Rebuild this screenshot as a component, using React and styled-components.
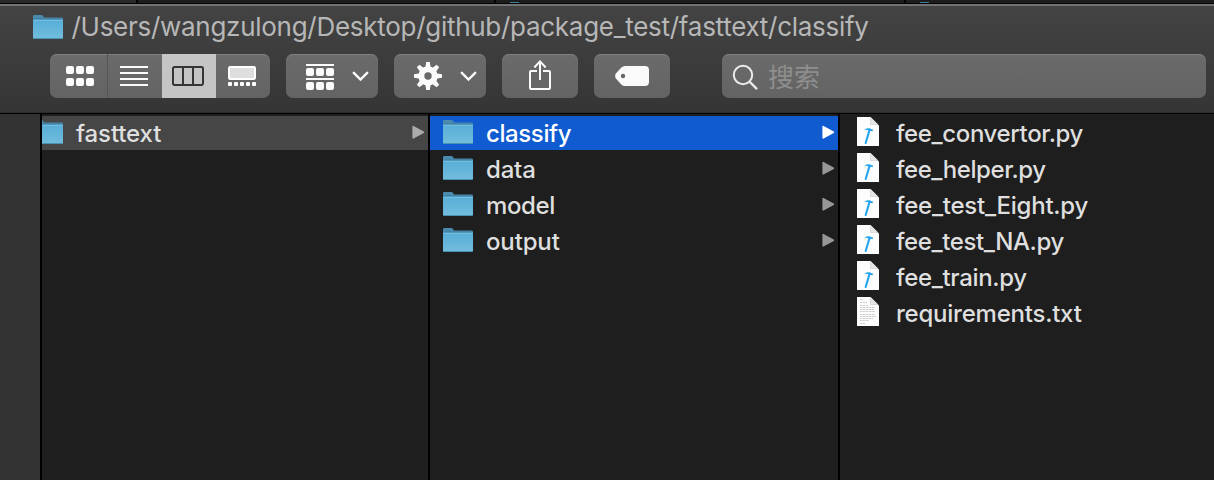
import React from "react";
import styled, { createGlobalStyle } from "styled-components";

const GlobalStyle = createGlobalStyle`
  * { box-sizing: border-box; }
  html, body { margin: 0; padding: 0; background: #1e1e1e; overflow: hidden; }
  svg { display: block; flex: none; }
`;

const Window = styled.div`
  width: 1214px;
  height: 480px;
  display: flex;
  flex-direction: column;
  font-family: Inter, "Noto Sans CJK SC", sans-serif;
  background: #1e1e1e;
  overflow: hidden;
`;

const Backdrop = styled.div`
  display: flex;
  flex: none;
  height: 4px;
  border-bottom: 1px solid #050505;
  background: #1d1d1d;
`;

const BackdropPane = styled.div`
  width: ${(p) => p.$width}px;
  flex: none;
  padding: 2px 0 0 ${(p) => p.$inset || 0}px;
  background: ${(p) => p.$color || "#1d1d1d"};
  border-right: ${(p) => (p.$last ? "0" : "2px solid #000")};
`;

const FolderTip = styled.div`
  width: 9px;
  height: 1px;
  background: #3f7d9c;
`;

const Header = styled.header`
  flex: none;
  height: 110px;
  border-top: 2px solid #727372;
  border-bottom: 1px solid #000;
  background: linear-gradient(#434343, #353535);
  box-shadow: inset 0 -1px 0 #2c2c2c;
`;

const TitleBar = styled.div`
  height: 48px;
  padding: 0 0 7px 33px;
  display: flex;
  align-items: center;
`;

const Title = styled.div`
  margin-left: 8.5px;
  font-size: 26px;
  line-height: 34px;
  letter-spacing: ${(p) => p.$tracking}px;
  color: #b7b7b7;
  white-space: nowrap;
`;

const Toolbar = styled.div`
  display: flex;
  gap: 16px;
  padding: 0 8px 0 50px;
  height: 44px;
`;

const Control = styled.div`
  display: flex;
  flex: none;
  width: ${(p) => p.$width}px;
  height: 44px;
  border-radius: 7px;
  overflow: hidden;
  background: linear-gradient(#6b6b6b, #636363);
  box-shadow: inset 0 1px 0 #7e7e7e;
`;

const Segment = styled.div`
  width: ${(p) => p.$width}px;
  height: 44px;
  display: flex;
  align-items: center;
  justify-content: center;
  padding: ${(p) => (p.$divided ? "0 0 0 3px" : "0 2px 0 0")};
  background: ${(p) => (p.$active ? "#c5c5c5" : "transparent")};
  border-right: ${(p) => (p.$divided ? "1px solid #565656" : "0")};
`;

const MenuControl = styled(Control)`
  align-items: center;
  padding-left: 20px;
  gap: 18px;
`;

const ButtonControl = styled(Control)`
  align-items: center;
  justify-content: center;
  padding-bottom: ${(p) => p.$lift || 0}px;
`;

const SearchField = styled(Control)`
  margin-left: 36px;
  align-items: center;
  padding-left: 10px;
  gap: 10px;
`;

const Placeholder = styled.span`
  font-family: "Noto Sans CJK SC", sans-serif;
  font-size: 26px;
  line-height: 44px;
  color: #8e8e8e;
`;

const Browser = styled.main`
  display: flex;
  flex: 1;
`;

const Sidebar = styled.aside`
  width: 42px;
  flex: none;
  background: #323232;
  border-right: 2px solid #000;
`;

const Column = styled.section`
  width: ${(p) => p.$width}px;
  flex: none;
  padding-top: 2px;
  display: flex;
  flex-direction: column;
  gap: 2px;
  overflow: hidden;
  border-right: ${(p) => (p.$last ? "0" : "2px solid #000")};
`;

const Row = styled.div`
  height: 34px;
  display: flex;
  align-items: center;
  padding: 0 3.5px 0 ${(p) => p.$inset}px;
  color: ${(p) => (p.$tone === "selected" ? "#fff" : "#dfdfdf")};
  background: ${(p) => ({ selected: "#105bd0", path: "#464646" })[p.$tone] || "transparent"};
`;

const IconSlot = styled.span`
  display: flex;
  flex: none;
  padding-bottom: 2px;
  margin-left: ${(p) => (p.$clipped ? -9 : 0)}px;
`;

const Name = styled.span`
  flex: 1;
  margin-left: ${(p) => p.$gap}px;
  padding-top: 2px;
  font-size: 24px;
  font-weight: 450;
  line-height: 34px;
  letter-spacing: ${(p) => p.$tracking || 0}px;
  white-space: nowrap;
`;

const Folder = () => (
  <svg width="30" height="26" viewBox="0 0 30 26">
    <defs>
      <linearGradient id="folderFront" x1="0" y1="0" x2="0" y2="1">
        <stop offset="0" stopColor="#57add7" />
        <stop offset="1" stopColor="#72bddd" />
      </linearGradient>
    </defs>
    <path d="M0 2.2Q0 1 1.2 1H8.4Q9.4 1 10 2L11 3.6H28.7Q30 3.6 30 5V9H0Z" fill="#4a8aad" />
    <path d="M0 5.6H30V23.4Q30 25 28.4 25H1.6Q0 25 0 23.4Z" fill="url(#folderFront)" />
    <path d="M.5 6.2H29.5" stroke="#7bc5e4" />
    <path d="M.5 5H29.5" stroke="#397699" strokeWidth=".7" />
    <path d="M1 24.5H29" stroke="#4c91b1" />
  </svg>
);

const Arrow = ({ color }) => (
  <svg width="13" height="16" viewBox="0 0 13 16">
    <path d="M1.2 1.6L11.4 7.2L1.2 12.9Z" fill={color} stroke={color} strokeWidth="1.6" strokeLinejoin="round" />
  </svg>
);

const Page = ({ children }) => (
  <svg width="22" height="30" viewBox="0 0 22 30">
    <path d="M0 0H13.5L22 8.5V29H0Z" fill="#fdfdfd" />
    <path d="M13.5 0V7.5H21L22 8.5L13.5 0Z" fill="#e5e5e5" />
    <path d="M13.5 .5V7.5H21" stroke="#cfcfcf" strokeWidth=".7" fill="none" />
    {children}
  </svg>
);

const ScriptPage = () => (
  <Page>
    <path d="M12.7 12.4L8.7 26" stroke="#27a5ee" strokeWidth="2.1" strokeLinecap="round" />
    <path d="M7.4 12.8Q9.5 10.4 12.4 11.5L16 12.5L15.7 14.2L12 13.4Q10 12.6 7.4 12.8Z" fill="#27a5ee" />
  </Page>
);

const TextPage = () => (
  <Page>
    <path
      d="M3 2.5H6M3 5.5H10M3 8.5H12M3 10.5H18M3 12.5H17M3 14.5H18M3 17.5H18M3 19.5H19M3 21.5H16M3 23.5H12M3 26.5H8"
      stroke="#cacaca"
      strokeWidth=".9"
      strokeDasharray="2.4 .5"
    />
  </Page>
);

const GridIcon = () => (
  <svg width="28" height="20" viewBox="0 0 28 20" fill="#fafafa">
    {[0, 12].map((y) => [0, 10, 20].map((x) => <rect key={`${x}-${y}`} x={x} y={y} width="8" height="8" rx="2" />))}
  </svg>
);

const ListIcon = () => (
  <svg width="28" height="20" viewBox="0 0 28 20">
    <path d="M0 1H28M0 7H28M0 13H28M0 19H28" stroke="#fafafa" strokeWidth="2" />
  </svg>
);

const ColumnsIcon = () => (
  <svg width="32" height="20" viewBox="0 0 32 20" fill="none" stroke="#353535" strokeWidth="2">
    <rect x="1" y="1" width="30" height="18" rx="1.4" />
    <path d="M11 1V19M21 1V19" />
  </svg>
);

const GalleryIcon = () => (
  <svg width="28" height="20" viewBox="0 0 28 20">
    <rect x="1" y="1" width="26" height="12" rx="1.2" fill="#dedede" stroke="#fff" strokeWidth="2" />
    {[0, 6, 12, 18, 24].map((x) => (
      <rect key={x} x={x} y="16" width="4" height="4" rx="1" fill="#fff" />
    ))}
  </svg>
);

const GroupIcon = () => (
  <svg width="28" height="28" viewBox="0 -2 28 28" fill="#fafafa">
    <rect width="28" height="2" />
    <rect y="14" width="28" height="2" />
    {[4, 18].map((y) => [0, 10, 20].map((x) => <rect key={`${x}-${y}`} x={x} y={y} width="8" height="8" rx="2" />))}
  </svg>
);

const GearIcon = () => (
  <svg width="28" height="28" viewBox="0 0 28 28">
    {[0, 45, 90, 135].map((a) => (
      <path key={a} d="M12.2 0H15.8L16.5 5V23L15.8 28H12.2L11.5 23V5Z" fill="#fafafa" transform={`rotate(${a} 14 14)`} />
    ))}
    <circle cx="14" cy="14" r="9.7" fill="#fafafa" />
    <circle cx="14" cy="14" r="3.7" fill="#686868" />
  </svg>
);

const Chevron = () => (
  <svg width="17" height="10" viewBox="0 0 17 10">
    <path d="M1.8 1.8L8.5 8.5L15.2 1.8" fill="none" stroke="#fafafa" strokeWidth="2.4" strokeLinecap="round" />
  </svg>
);

const ShareIcon = () => (
  <svg width="22" height="32" viewBox="0 0 22 32" fill="none" stroke="#fafafa" strokeWidth="2">
    <path d="M8 12H2Q1 12 1 13V29Q1 30 2 30H20Q21 30 21 29V13Q21 12 20 12H14" />
    <path d="M11 21V3M5.3 8.5L11 2.4L16.7 8.5" />
  </svg>
);

const TagIcon = () => (
  <svg width="34" height="20" viewBox="0 0 34 20">
    <path
      d="M10 0H30Q34 0 34 4V16Q34 20 30 20H10Q8 20 6.3 18.5L.9 12.5Q-.7 10 .9 7.5L6.3 1.5Q8 0 10 0Z"
      fill="#fafafa"
    />
    <circle cx="8" cy="10" r="2.2" fill="#676767" />
  </svg>
);

const SearchIcon = () => (
  <svg width="26" height="28" viewBox="0 -2.5 26 28" fill="none" stroke="#ececec" strokeWidth="2">
    <circle cx="11" cy="10.5" r="9.2" />
    <path d="M17.4 17L25 24.6" strokeWidth="2.4" />
  </svg>
);

const folders = [
  { name: "classify", selected: true, tracking: -0.4 },
  { name: "data", tracking: -0.2 },
  { name: "model", tracking: -0.35 },
  { name: "output", tracking: -0.15 },
];

const files = [
  { name: "fee_convertor.py", tracking: -0.37 },
  { name: "fee_helper.py", tracking: -0.44 },
  { name: "fee_test_Eight.py", tracking: -0.25 },
  { name: "fee_test_NA.py", tracking: -0.4 },
  { name: "fee_train.py", tracking: -0.33 },
  { name: "requirements.txt", text: true, tracking: -0.23 },
];

export default function App() {
  return (
    <Window>
      <GlobalStyle />
      <Backdrop>
        <BackdropPane $width={138} $color="#292929" />
        <BackdropPane $width={358} />
        <BackdropPane $width={410} $inset={14}><FolderTip /></BackdropPane>
        <BackdropPane $width={308} $inset={14} $last><FolderTip /></BackdropPane>
      </Backdrop>
      <Header>
        <TitleBar>
          <Folder />
          <Title $tracking={-0.28}>/Users/wangzulong/Desktop/github/package_test/fasttext/classify</Title>
        </TitleBar>
        <Toolbar>
          <Control $width={220}>
            <Segment $width={58} $divided><GridIcon /></Segment>
            <Segment $width={54}><ListIcon /></Segment>
            <Segment $width={54} $active><ColumnsIcon /></Segment>
            <Segment $width={54}><GalleryIcon /></Segment>
          </Control>
          <MenuControl $width={92}><GroupIcon /><Chevron /></MenuControl>
          <MenuControl $width={92}><GearIcon /><Chevron /></MenuControl>
          <ButtonControl $width={76} $lift={2}><ShareIcon /></ButtonControl>
          <ButtonControl $width={76}><TagIcon /></ButtonControl>
          <SearchField $width={484}>
            <SearchIcon />
            <Placeholder>搜索</Placeholder>
          </SearchField>
        </Toolbar>
      </Header>
      <Browser>
        <Sidebar />
        <Column $width={388}>
          <Row $inset={0} $tone="path">
            <IconSlot $clipped><Folder /></IconSlot>
            <Name $gap={13} $tracking={-0.12}>fasttext</Name>
            <Arrow color="#acacac" />
          </Row>
        </Column>
        <Column $width={410}>
          {folders.map((f) => (
            <Row key={f.name} $inset={13} $tone={f.selected ? "selected" : "plain"}>
              <IconSlot><Folder /></IconSlot>
              <Name $gap={13} $tracking={f.tracking}>{f.name}</Name>
              <Arrow color={f.selected ? "#fff" : "#979797"} />
            </Row>
          ))}
        </Column>
        <Column $width={374} $last>
          {files.map((f) => (
            <Row key={f.name} $inset={17} $tone="plain">
              <IconSlot>{f.text ? <TextPage /> : <ScriptPage />}</IconSlot>
              <Name $gap={17} $tracking={f.tracking}>{f.name}</Name>
            </Row>
          ))}
        </Column>
      </Browser>
    </Window>
  );
}
